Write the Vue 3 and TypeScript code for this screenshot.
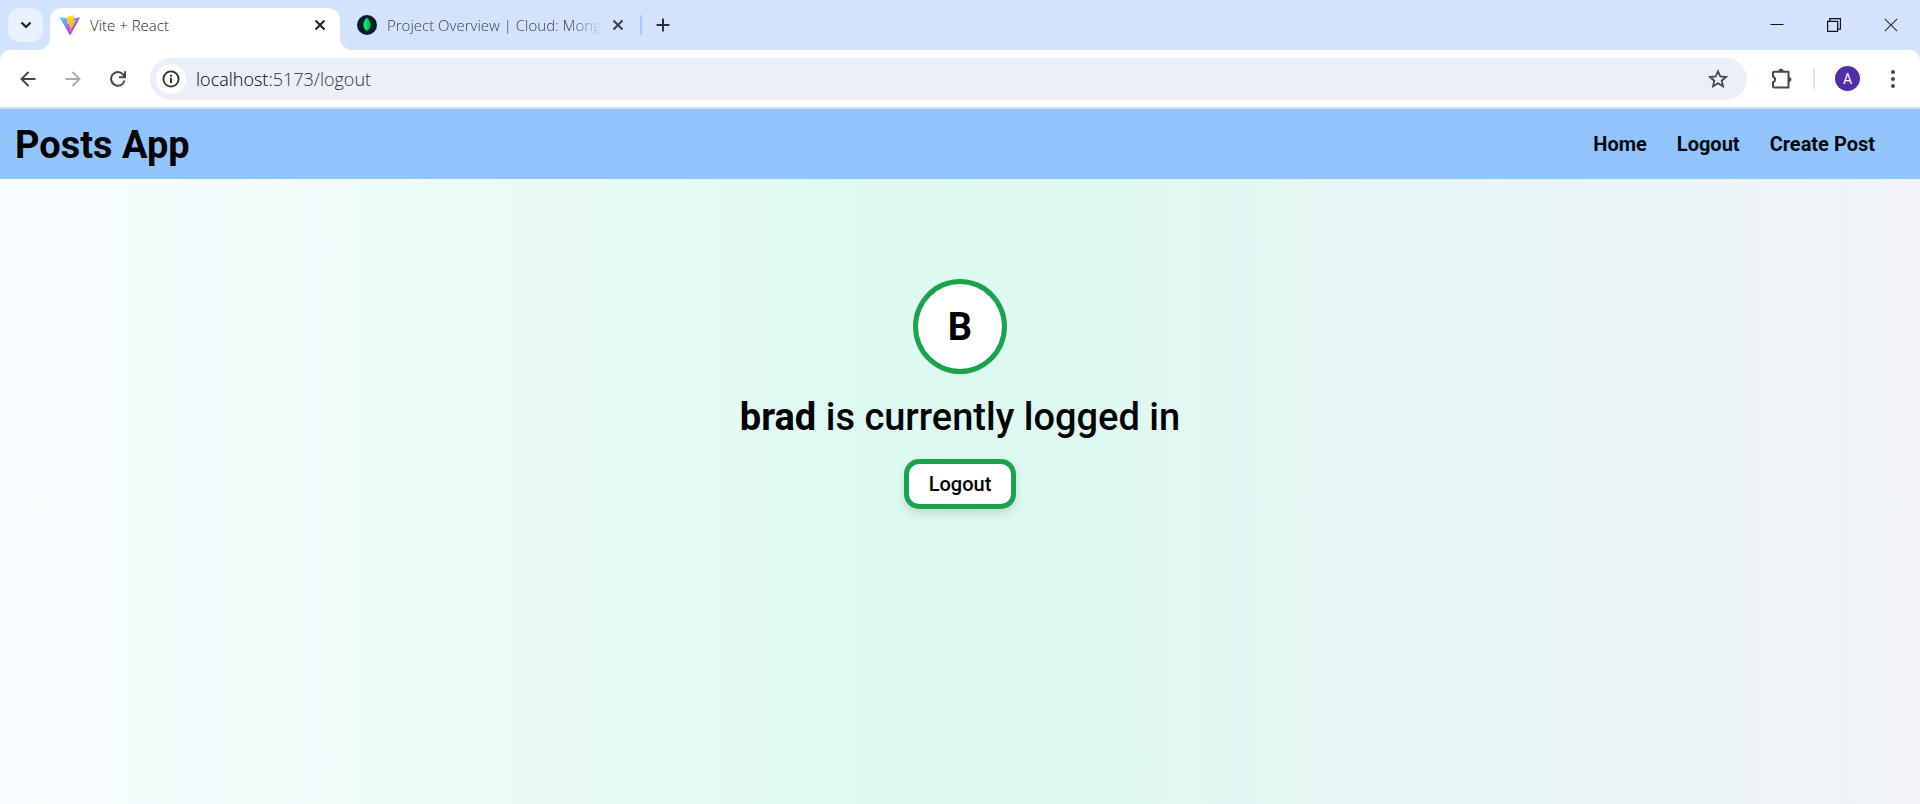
<script setup lang="ts">
import { ref, computed } from 'vue'

interface NavItem {
  label: string
  href: string
}

const username = ref<string>('brad')
const initial = computed<string>(() => username.value.charAt(0).toUpperCase())

const navItems: NavItem[] = [
  { label: 'Home', href: '#home' },
  { label: 'Logout', href: '#logout' },
  { label: 'Create Post', href: '#create' },
]
</script>

<template>
  <div class="window">
    <header class="tab-strip">
      <button class="tab-search" type="button" aria-label="Search tabs">
        <svg width="12" height="8" viewBox="0 0 12 8"><path d="M1.500 1.500 6 6l4.500-4.500" fill="none" stroke="#1f2024" stroke-width="2.200" /></svg>
      </button>

      <div class="tab active">
        <svg class="favicon" width="20" height="20" viewBox="0 0 256 257">
          <defs>
            <linearGradient id="viteBody" x1="0" x2="0.577" y1="0.077" y2="0.783">
              <stop offset="0" stop-color="#41d1ff" />
              <stop offset="1" stop-color="#bd34fe" />
            </linearGradient>
            <linearGradient id="viteBolt" x1="0.434" x2="0.503" y1="0.022" y2="0.890">
              <stop offset="0" stop-color="#ffea83" />
              <stop offset="0.083" stop-color="#ffdd35" />
              <stop offset="1" stop-color="#ffa800" />
            </linearGradient>
          </defs>
          <path fill="url(#viteBody)" d="M255.153 37.938 134.897 252.976c-2.483 4.440-8.862 4.466-11.382.048L.875 37.958c-2.746-4.814 1.371-10.646 6.827-9.670l120.385 21.517a6.537 6.537 0 0 0 2.322-.004l117.867-21.483c5.438-.991 9.574 4.796 6.877 9.620Z" />
          <path fill="url(#viteBolt)" d="M185.432.063 96.440 17.501a3.268 3.268 0 0 0-2.634 3.014l-5.474 92.456a3.268 3.268 0 0 0 3.997 3.378l24.777-5.718c2.318-.535 4.413 1.507 3.936 3.838l-7.361 36.047c-.495 2.426 1.782 4.500 4.151 3.780l15.304-4.649c2.372-.720 4.652 1.360 4.150 3.788l-11.698 56.621c-.732 3.542 3.979 5.473 5.943 2.437l1.313-2.028 72.516-144.720c1.215-2.423-.880-5.186-3.540-4.672l-25.505 4.922c-2.396.462-4.435-1.770-3.759-4.114l16.646-57.705c.677-2.350-1.370-4.583-3.769-4.113Z" />
        </svg>
        <span class="tab-title">Vite + React</span>
        <button class="icon-button small" type="button" aria-label="Close Vite + React">
          <svg width="12" height="12" viewBox="0 0 12 12"><path d="m1.500 1.500 9 9m0-9-9 9" stroke="#1f2024" stroke-width="2" /></svg>
        </button>
      </div>

      <div class="tab">
        <svg class="favicon" width="20" height="20" viewBox="0 0 20 20">
          <circle cx="10" cy="10" r="10" fill="#061e2d" />
          <path d="M10 2.500C7.500 5 6.300 7.500 6.400 10.200c.1 2.500 1.500 4.200 3.200 5.400L10 17.500Z" fill="#00ed64" />
          <path d="M10 2.500c2.500 2.500 3.700 5 3.600 7.700-.1 2.500-1.500 4.200-3.200 5.400L10 17.500Z" fill="#00c853" />
        </svg>
        <span class="tab-title fading">Project Overview | Cloud: Mong</span>
        <button class="icon-button small" type="button" aria-label="Close Project Overview">
          <svg width="12" height="12" viewBox="0 0 12 12"><path d="m1.500 1.500 9 9m0-9-9 9" stroke="#3c4043" stroke-width="2" /></svg>
        </button>
      </div>

      <span class="strip-divider"></span>
      <button class="icon-button new-tab" type="button" aria-label="New tab">
        <svg width="14" height="14" viewBox="0 0 14 14"><path d="M7 .500v13M.500 7h13" stroke="#303134" stroke-width="2" /></svg>
      </button>

      <div class="window-controls">
        <button type="button" aria-label="Minimize">
          <svg width="14" height="14" viewBox="0 0 14 14"><path d="M.500 6.500h13" stroke="#111" /></svg>
        </button>
        <button type="button" aria-label="Restore">
          <svg width="14" height="14" viewBox="0 0 14 14" fill="none" stroke="#111" stroke-width="1.200"><path d="M.600 3.400h10v10h-10z M2.800 3.400V.600h10.600v10.600h-2.800" /></svg>
        </button>
        <button type="button" aria-label="Close window">
          <svg width="14" height="14" viewBox="0 0 14 14"><path d="m.800.800 12.400 12.400m0-12.400L.800 13.200" stroke="#333" stroke-width="1.200" /></svg>
        </button>
      </div>
    </header>

    <div class="toolbar-back">
      <div class="toolbar">
        <button class="icon-button" type="button" aria-label="Back">
          <svg width="16" height="16" viewBox="0 0 16 16" fill="none" stroke="#474747" stroke-width="1.900"><path d="M15.500 8H2M8.500 1 1.500 8l7 7" /></svg>
        </button>
        <button class="icon-button" type="button" aria-label="Forward" disabled>
          <svg width="16" height="16" viewBox="0 0 16 16" fill="none" stroke="#aaa" stroke-width="1.900"><path d="M.500 8H14M7.500 1l7 7-7 7" /></svg>
        </button>
        <button class="icon-button" type="button" aria-label="Reload">
          <svg width="16" height="16" viewBox="0 0 16 16" fill="none" stroke="#474747" stroke-width="2"><path d="M14.500 9.500A6.800 6.800 0 1 1 13.400 3.900L15 5.800M15 .200v6H9" /></svg>
        </button>

        <div class="address-bar">
          <button class="site-info" type="button" aria-label="View site information">
            <svg width="18" height="18" viewBox="0 0 18 18"><circle cx="9" cy="9" r="7.600" fill="none" stroke="#303134" stroke-width="1.800" /><path d="M9 8v5M9 4.800v2" stroke="#303134" stroke-width="1.900" /></svg>
          </button>
          <span class="url"><span class="host">localhost</span>:5173/logout</span>
          <button class="icon-button star" type="button" aria-label="Bookmark this page">
            <svg width="20" height="20" viewBox="0 0 20 20"><path d="m10 2.300 2.300 5.200 5.700.500-4.300 3.700 1.300 5.600-5-3-5 3 1.300-5.600L2 8l5.700-.500Z" fill="none" stroke="#474747" stroke-width="1.800" /></svg>
          </button>
        </div>

        <button class="icon-button extensions" type="button" aria-label="Extensions">
          <svg width="22" height="22" viewBox="0 0 22 22"><path d="M3 3.700h14.500v15.800H3a1 1 0 0 1-1-1v-4.300a2.800 2.800 0 0 0 0-5.400V4.700a1 1 0 0 1 1-1Z" fill="none" stroke="#474747" stroke-width="2" stroke-linejoin="round" /><path d="M7.400 3.300a2.600 2.600 0 0 1 5.200 0ZM18 9a2.500 2.500 0 0 1 0 5Z" fill="#474747" /></svg>
        </button>
        <span class="toolbar-divider"></span>
        <button class="profile" type="button" aria-label="Profile A">A</button>
        <button class="icon-button" type="button" aria-label="Menu">
          <svg width="6" height="18" viewBox="0 0 6 18" fill="#474747"><circle cx="3" cy="2" r="2" /><circle cx="3" cy="9" r="2" /><circle cx="3" cy="16" r="2" /></svg>
        </button>
      </div>
    </div>

    <nav class="navbar">
      <h1>Posts App</h1>
      <ul>
        <li v-for="item in navItems" :key="item.label">
          <a :href="item.href">{{ item.label }}</a>
        </li>
      </ul>
    </nav>

    <main class="page">
      <div class="avatar">{{ initial }}</div>
      <h2><strong>{{ username }}</strong> is currently logged in</h2>
      <button class="logout" type="button">Logout</button>
    </main>
  </div>
</template>

<style>
body {
  margin: 0;
}
</style>

<style scoped>
.window {
  display: flex;
  flex-direction: column;
  min-height: 100vh;
  font-family: "Open Sans", "Noto Sans", sans-serif;
}

button {
  display: flex;
  align-items: center;
  justify-content: center;
  padding: 0;
  border: 0;
  background: none;
  font: inherit;
  flex: none;
}

svg {
  display: block;
  flex: none;
}

.tab-strip {
  display: flex;
  align-items: center;
  height: 50px;
  padding: 0 1px 0 8px;
  background: #d3e2fd;
}

.tab-search {
  width: 35px;
  height: 34px;
  margin-right: 7px;
  border-radius: 12px;
  background: #e9f0fe;
}

.tab {
  display: flex;
  align-items: center;
  width: 290px;
  height: 42px;
  box-sizing: border-box;
  padding: 0 10px 8px;
  color: #3c4043;
  font-size: 15px;
  font-weight: 300;
}

.tab.active {
  position: relative;
  align-self: flex-end;
  border-radius: 12px 12px 0 0;
  background: #fff;
  color: #1f2024;
}

.tab.active::before,
.tab.active::after {
  content: "";
  position: absolute;
  bottom: 0;
  width: 12px;
  height: 12px;
}

.tab.active::before {
  right: 100%;
  background: radial-gradient(circle at 0 0, transparent 12px, #fff 12px);
}

.tab.active::after {
  left: 100%;
  background: radial-gradient(circle at 100% 0, transparent 12px, #fff 12px);
}

.tab:not(.active) {
  width: 300px;
  padding: 0 12px 0 17px;
}

.tab-title {
  flex: 1;
  min-width: 0;
  margin-left: 10px;
  white-space: nowrap;
}

.tab-title.fading {
  margin-right: 4px;
  mask-image: linear-gradient(to right, #000 85%, transparent);
}

.icon-button {
  width: 45px;
  height: 45px;
}

.icon-button.small {
  width: 21px;
  height: 24px;
}

.strip-divider {
  width: 2px;
  height: 20px;
  border-radius: 1px;
  background: #a8c7fa;
}

.new-tab {
  width: 42px;
}

.window-controls {
  display: flex;
  margin-left: auto;
}

.window-controls button {
  width: 57px;
  height: 50px;
}

.toolbar-back {
  background: #d3e2fd;
}

.toolbar {
  display: flex;
  align-items: center;
  height: 57px;
  padding: 0 5px;
  border-bottom: 2px solid #cfe0f2;
  border-radius: 10px 10px 0 0;
  background: #fff;
}

.address-bar {
  display: flex;
  flex: 1;
  align-items: center;
  height: 42px;
  margin-left: 10px;
  padding: 0 7px 0 6px;
  border-radius: 21px;
  background: #ebeff9;
}

.site-info {
  width: 30px;
  height: 30px;
  border-radius: 50%;
  background: #fff;
}

.url {
  flex: 1;
  margin-left: 10px;
  color: #303134;
  font-size: 18px;
  font-weight: 300;
}

.host {
  color: #000;
}

.extensions {
  margin-left: 12px;
}

.toolbar-divider {
  width: 2px;
  height: 20px;
  margin: 0 20px 0 9px;
  background: #d3e2fd;
}

.profile {
  width: 25px;
  height: 25px;
  border-radius: 50%;
  background: #512da8;
  color: #fff;
  font-family: Roboto, sans-serif;
  font-size: 14px;
}

.profile + .icon-button {
  margin-left: 10px;
}

.navbar {
  display: flex;
  align-items: center;
  justify-content: space-between;
  height: 70px;
  padding: 0 45px 0 15px;
  background: #93c5fd;
  color: #030712;
  font-family: Roboto, sans-serif;
}

.navbar h1 {
  margin: 0;
  padding-top: 2px;
  color: #000;
  font-size: 38px;
  font-weight: 700;
  line-height: 45px;
}

.navbar ul {
  display: flex;
  gap: 30px;
  margin: 0;
  padding: 0;
  list-style: none;
}

.navbar a {
  color: inherit;
  font-size: 20px;
  font-weight: 700;
  line-height: 30px;
  text-decoration: none;
}

.page {
  display: flex;
  flex: 1;
  flex-direction: column;
  align-items: center;
  padding: 100px 20px 20px;
  background: linear-gradient(to right, #f9fdff, #dcf9f1 50%, #f1f3f8);
  color: #000;
  font-family: Roboto, sans-serif;
}

.avatar {
  display: flex;
  align-items: center;
  justify-content: center;
  width: 84px;
  height: 85px;
  border: 5px solid #1ba34c;
  border-radius: 50%;
  background: #fff;
  font-size: 38px;
  font-weight: 700;
}

.page h2 {
  margin: 21px 0 19px;
  font-size: 38px;
  font-weight: 500;
  line-height: 45px;
}

.page strong {
  font-weight: 700;
}

.logout {
  height: 50px;
  padding: 0 20px;
  border: 5px solid #1ba34c;
  border-radius: 15px;
  background: #fff;
  box-shadow: 0 5px 8px rgb(0 0 0 / 12%);
  color: #000;
  font-size: 20px;
  font-weight: 500;
}
</style>
